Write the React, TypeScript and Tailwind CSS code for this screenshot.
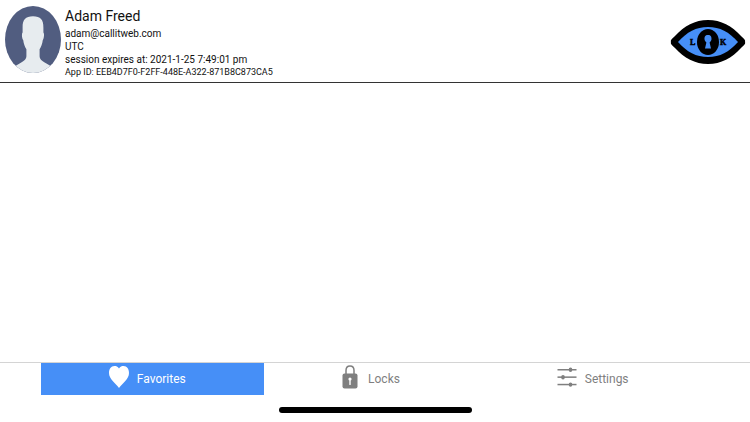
import React, { useState } from "react";

function Avatar() {
  return (
    <svg viewBox="0 0 56 68" className="h-[67px] w-14 shrink-0" preserveAspectRatio="none" role="img" aria-label="Profile picture">
      <defs>
        <clipPath id="avatar-clip">
          <ellipse cx="28" cy="34" rx="28" ry="34" />
        </clipPath>
      </defs>
      <g clipPath="url(#avatar-clip)">
        <rect width="56" height="68" fill="#515d80" />
        <path
          d="M28 10.5 C20.5 10.5 17.4 14 17.6 22 L17.6 27 C16.6 27.5 16.8 33 18.2 34.5 C18.6 38.5 20 41.5 21.4 44 L21.4 51 C21.2 54.5 18.5 56 15 58 L7 63 L7 68 L49 68 L49 63 L41 58 C37.5 56 34.8 54.5 34.6 51 L34.6 44 C36 41.5 37.4 38.5 37.8 34.5 C39.2 33 39.4 27.5 38.4 27 L38.4 22 C38.6 14 35.5 10.5 28 10.5 Z"
          fill="#e7ecef"
        />
      </g>
    </svg>
  );
}

function Logo() {
  return (
    <svg viewBox="0 0 76 46" className="h-[46px] w-[76px] shrink-0" role="img" aria-label="Lock eye logo">
      <path d="M1 23 C0 21 3 19 5 17 C14 7 25 1 38 1 C51 1 62 7 71 17 C73 19 76 21 75 23 C76 25 73 27 71 29 C62 39 51 45 38 45 C25 45 14 39 5 29 C3 27 0 25 1 23 Z" fill="#000" />
      <path d="M8 23 C17 13 26 8 38 8 C50 8 59 13 68 23 C59 33 50 38 38 38 C26 38 17 33 8 23 Z" fill="#468ff7" />
      <ellipse cx="38" cy="23" rx="11" ry="13" fill="#000" />
      <path d="M38 16 C35 16 34.5 18 34.5 20 C34.5 21.5 35.5 22.5 36.4 23.5 L35 29.5 L41 29.5 L39.6 23.5 C40.5 22.5 41.5 21.5 41.5 20 C41.5 18 41 16 38 16 Z" fill="#468ff7" />
      <text x="20" y="26" fontSize="8" fontWeight="700" stroke="#000" strokeWidth="0.5" className="font-['Liberation_Serif',serif]">L</text>
      <text x="50" y="26" fontSize="8" fontWeight="700" stroke="#000" strokeWidth="0.5" className="font-['Liberation_Serif',serif]">K</text>
    </svg>
  );
}

function HeartIcon() {
  return (
    <svg viewBox="0 0 20 24" className="mb-1 h-6 w-5" fill="currentColor" aria-hidden="true">
      <path d="M10 3.5 C8.8 1.6 7.2 1 5.4 1 C2 1 0 4 0 8 C0 14 6 17.5 10 23 C14 17.5 20 14 20 8 C20 4 18 1 14.6 1 C12.8 1 11.2 1.6 10 3.5 Z" />
    </svg>
  );
}

function LockIcon() {
  return (
    <svg viewBox="0 0 20 24" className="mb-1 h-6 w-5" aria-hidden="true">
      <path d="M6 10 V5.5 C6 2.8 7.8 1 10 1 C12.2 1 14 2.8 14 5.5 V10" fill="none" stroke="currentColor" strokeWidth="1.5" />
      <rect x="2.5" y="8.5" width="15" height="15" rx="2" fill="currentColor" />
      <circle cx="10" cy="14" r="1.6" fill="#fff" />
      <rect x="9.3" y="14" width="1.4" height="6" rx="0.5" fill="#fff" />
    </svg>
  );
}

function SlidersIcon() {
  return (
    <svg viewBox="0 0 20 24" className="mb-1 h-6 w-5" fill="currentColor" aria-hidden="true">
      <rect x="0.5" y="4" width="19" height="1.5" />
      <rect x="0.5" y="11.4" width="19" height="1.5" />
      <rect x="0.5" y="18.8" width="19" height="1.5" />
      <ellipse cx="13.5" cy="4.8" rx="1.8" ry="2.2" />
      <ellipse cx="6" cy="12.2" rx="1.8" ry="2.2" />
      <ellipse cx="13.5" cy="19.6" rx="1.8" ry="2.2" />
    </svg>
  );
}

const tabs = [
  { name: "Favorites", Icon: HeartIcon },
  { name: "Locks", Icon: LockIcon },
  { name: "Settings", Icon: SlidersIcon },
];

export default function App() {
  const [active, setActive] = useState("Favorites");
  return (
    <div className="flex min-h-screen flex-col bg-white font-[Roboto,sans-serif] text-[#111]">
      <header className="flex items-center justify-between border-b border-[#333] pt-1.5 pr-1 pb-1 pl-[5px]">
        <div className="flex items-start gap-1">
          <Avatar />
          <div className="text-[10px] leading-[13px]">
            <h1 className="text-sm leading-[21px]">Adam Freed</h1>
            <p>adam@callitweb.com</p>
            <p>UTC</p>
            <p>session expires at: 2021-1-25 7:49:01 pm</p>
            <p className="text-[9px] leading-3">App ID: EEB4D7F0-F2FF-448E-A322-871B8C873CA5</p>
          </div>
        </div>
        <Logo />
      </header>
      <main className="flex-1" />
      <footer className="border-t border-[#d4d4d4]">
        <nav className="mx-[41px] grid grid-cols-3">
          {tabs.map(({ name, Icon }) => (
            <button
              key={name}
              type="button"
              onClick={() => setActive(name)}
              className={
                "flex h-8 items-center justify-center gap-2 pr-2.5 text-xs " +
                (active === name ? "bg-[#468ff7] text-white" : "text-[#7f7f7f]")
              }
            >
              <Icon />
              <span>{name}</span>
            </button>
          ))}
        </nav>
        <div className="mx-auto mt-3 mb-[9px] h-1.5 w-[193px] rounded-full bg-black" />
      </footer>
    </div>
  );
}
